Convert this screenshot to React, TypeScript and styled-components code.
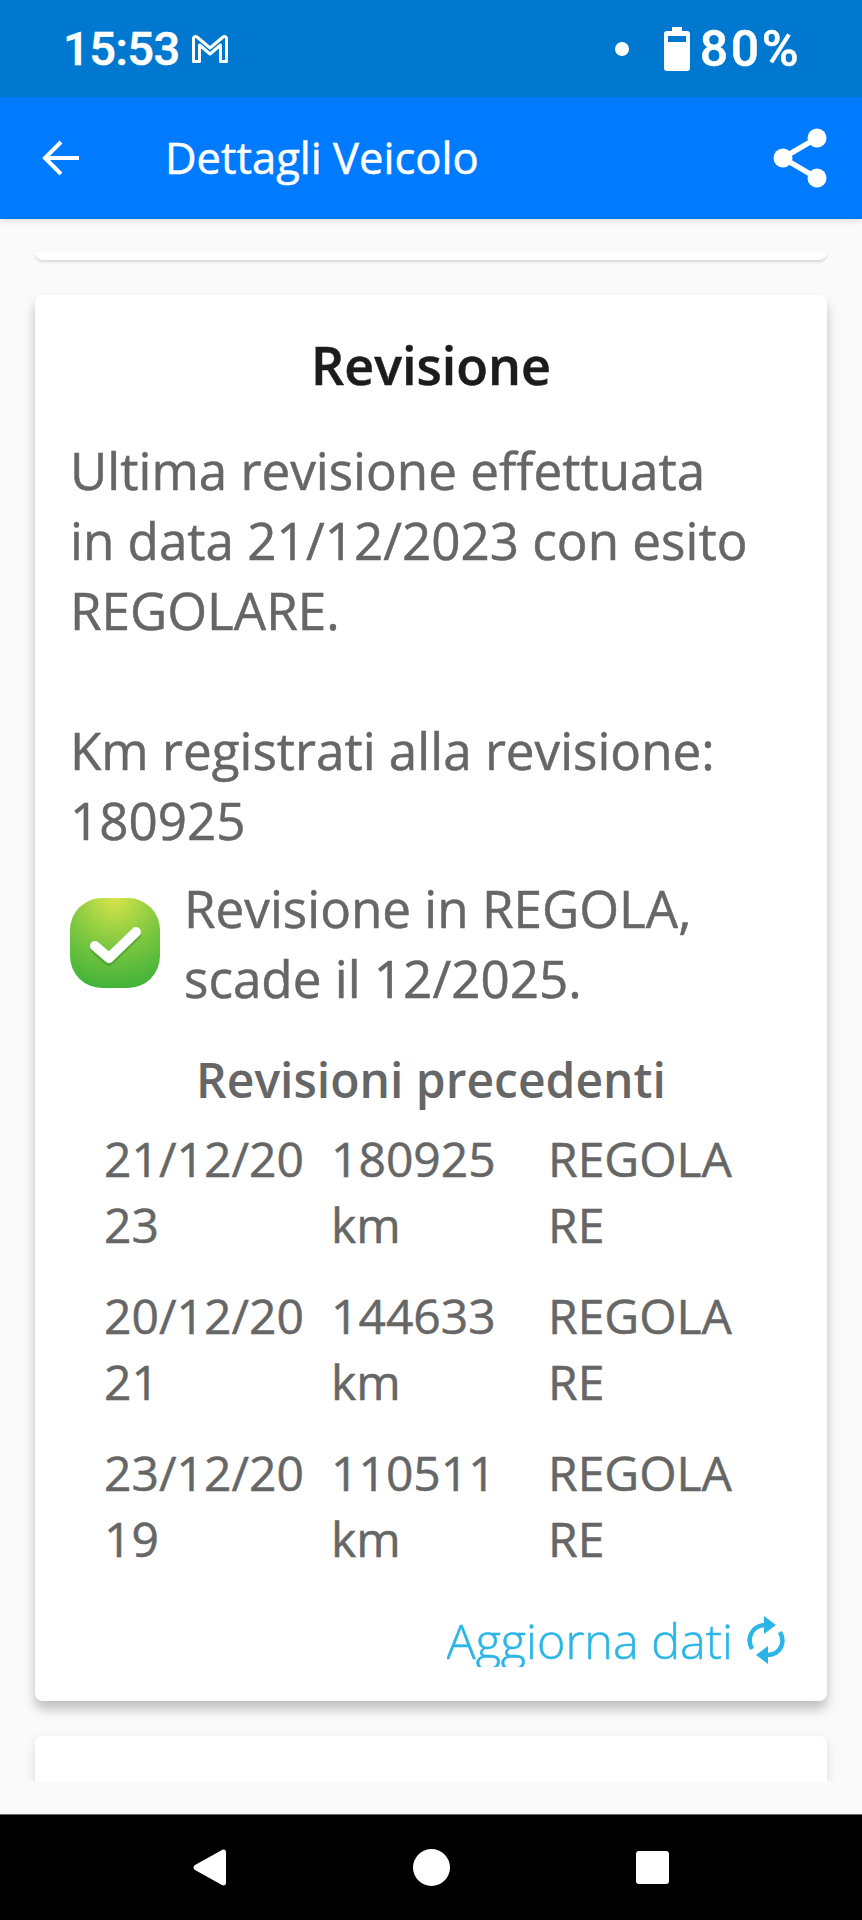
import React from "react";
import styled, { createGlobalStyle, css } from "styled-components";

const Global = createGlobalStyle`
  html, body { margin: 0; padding: 0; background: #fafafa; }
  * { box-sizing: border-box; }
`;
const thick = css` -webkit-text-stroke: 0.5px currentColor; `;
const Phone = styled.div`
  width: 862px; height: 1920px; display: flex; flex-direction: column;
  background: #fafafa; font-family: "Open Sans", sans-serif; overflow: hidden;
`;
const StatusBar = styled.div`
  height: 97px; background: #0078d0; color: #fff; display: flex; align-items: center;
  padding: 0 64px 0 63px; font-family: Roboto, sans-serif; font-weight: 500; font-size: 47px; ${thick}
`;
const Clock = styled.span` letter-spacing: -0.5px; `;
const Battery = styled.span` font-size: 50px; letter-spacing: 2.5px; margin-right: -3px; `;
const Spacer = styled.div` flex: 1; `;
const Dot = styled.span` width: 14px; height: 14px; border-radius: 50%; background: #fff; margin-right: 35px; `;
const AppBar = styled.header`
  height: 122px; background: #007bff; color: #fff; display: flex; align-items: center;
  padding: 0 35px 0 42px; position: relative; z-index: 2; box-shadow: 0 2px 6px rgba(0,0,0,.12);
`;
const AppTitle = styled.h1`
  margin: 0 0 0 85px; font-size: 43.5px; font-weight: 400; flex: 1; line-height: 1; ${thick}
`;
const Scroll = styled.main`
  height: 1562px; overflow: hidden; padding: 0 35px; display: flex; flex-direction: column; gap: 35px;
  flex: none;
`;
const PrevCard = styled.div`
  flex: none; margin-top: 33px; height: 8px; background: #fff; border-radius: 0 0 8px 8px;
  box-shadow: 0 2px 3px rgba(0,0,0,.14);
`;
const Card = styled.section`
  flex: none; background: #fff; border-radius: 8px; box-shadow: 0 8px 12px rgba(0,0,0,.24);
  padding: 35px 35px 0;
  height: 1406px;
`;
const Title = styled.h2`
  margin: 0; text-align: center; font-size: 52px; font-weight: 600; color: #1c1c1c; line-height: 70px; ${thick}
`;
const Para = styled.p`
  margin: 35px 0 0; font-size: 51.2px; font-weight: 400; line-height: 70px; color: #666; ${thick}
`;
const Status = styled.div`
  display: flex; align-items: center; gap: 24px; margin-top: 18px; font-size: 51.2px; font-weight: 400; line-height: 70px; color: #666; ${thick}
`;
const SubTitle = styled.h3`
  margin: 34px 0 0; text-align: center; font-size: 48px; font-weight: 600; color: #666; line-height: 66px;
`;
const Table = styled.div`
  display: grid; grid-template-columns: 227px 217px 200px; margin: 0 0 0 34px;
`;
const Cell = styled.div`
  font-size: 48px; font-weight: 400; line-height: 66px; color: #666; overflow-wrap: anywhere; padding: 13px 16px 12px 0; ${thick}
  &:nth-child(3n) { padding-right: 0; }
`;
const RefreshRow = styled.div`
  display: flex; justify-content: flex-end; align-items: flex-start; gap: 14px; margin-top: 25px; color: #2bb5e6;
  padding-right: 7px;
`;
const RefreshText = styled.span`
  font-size: 48.5px; font-weight: 300; line-height: 62px; height: 58px; overflow: hidden; display: block; ${thick}
`;
const RefreshIcon = styled.svg` flex: none; margin-top: 7px; `;
const NextCard = styled.div`
  flex: none; height: 100px; background: #fff; border-radius: 8px; box-shadow: 0 4px 12px rgba(0,0,0,.12);
`;
const Gap = styled.div` height: 34px; background: #fafafa; flex: none; border-bottom: 1px solid #666; `;
const NavBar = styled.nav`
  height: 105px; background: #000; display: flex; align-items: center; justify-content: center;
  flex: none;
`;
const NavSlot = styled.div` width: 221px; display: flex; justify-content: center; `;

const Check = () => (
  <svg width="90" height="90" viewBox="0 0 90 90" style={{ flex: "none" }}>
    <defs>
      <radialGradient id="g" cx="50%" cy="0%" r="100%">
        <stop offset="0" stopColor="#d7e54a" />
        <stop offset=".55" stopColor="#7cc73f" />
        <stop offset="1" stopColor="#43b33a" />
      </radialGradient>
    </defs>
    <rect width="90" height="90" rx="32" fill="url(#g)" />
    <path d="M25 48 L39 60 L66 34" fill="none" stroke="#3f9a30" strokeOpacity=".6" strokeWidth="10" strokeLinecap="round" strokeLinejoin="round" transform="translate(0 3)" />
    <path d="M25 48 L39 60 L66 34" fill="none" stroke="#fff" strokeWidth="10" strokeLinecap="round" strokeLinejoin="round" />
  </svg>
);

const rows = [
  ["21/12/2023", "180925 km", "REGOLARE"],
  ["20/12/2021", "144633 km", "REGOLARE"],
  ["23/12/2019", "110511 km", "REGOLARE"],
];

export default function App() {
  return (
    <Phone>
      <Global />
      <StatusBar>
        <Clock>15:53</Clock>
        <svg width="38" height="30" viewBox="0 0 38 30" style={{ marginLeft: 11 }} fill="none" stroke="#fff" strokeWidth="3" strokeLinejoin="round">
          <path d="M2.5 27.5V4.5C2.5 2.5 4.5 1.8 6 3L19 14 32 3c1.5-1.2 3.5-.5 3.5 1.5v23h-6V11L19 20 8.5 11v16.5z" />
        </svg>
        <Spacer />
        <Dot />
        <svg width="26" height="44" viewBox="0 0 26 44" style={{ marginRight: 10 }}>
          <path fill="#fff" d="M8 0h10v4h5a3 3 0 0 1 3 3v34a3 3 0 0 1-3 3H3a3 3 0 0 1-3-3V7a3 3 0 0 1 3-3h5z" />
          <rect x="4" y="9" width="18" height="6" fill="#0078d0" />
        </svg>
        <Battery>80%</Battery>
      </StatusBar>
      <AppBar>
        <svg width="38" height="36" viewBox="0 0 38 36" fill="none" stroke="#fff" strokeWidth="4" style={{ flex: "none" }}>
          <path d="M37 18H3M19 2L3 18l16 16" />
        </svg>
        <AppTitle>Dettagli Veicolo</AppTitle>
        <svg width="54" height="60" viewBox="0 0 54 60" fill="#fff" stroke="#fff" style={{ flex: "none" }}>
          <circle cx="44" cy="10" r="9.5" stroke="none" />
          <circle cx="10" cy="30" r="9.5" stroke="none" />
          <circle cx="44" cy="50" r="9.5" stroke="none" />
          <path d="M44 10L10 30l34 20" fill="none" strokeWidth="5.5" />
        </svg>
      </AppBar>
      <Scroll>
        <PrevCard />
        <Card>
          <Title>Revisione</Title>
          <Para>
            Ultima revisione effettuata<br />in data 21/12/2023 con esito<br />REGOLARE.<br /><br />
            Km registrati alla revisione:<br />180925
          </Para>
          <Status>
            <Check />
            <div>Revisione in REGOLA,<br />scade il 12/2025.</div>
          </Status>
          <SubTitle>Revisioni precedenti</SubTitle>
          <Table>
            {rows.flat().map((c, i) => <Cell key={i}>{c}</Cell>)}
          </Table>
          <RefreshRow>
            <RefreshText>Aggiorna dati</RefreshText>
            <RefreshIcon width="38" height="48" viewBox="0 0 38 48" fill="none" stroke="#2bb5e6" strokeWidth="4.5">
              <path d="M5 33C-1 22 5 10 18 9" />
              <path d="M33 16c6 11 0 23-13 23" />
              <path d="M17 0l12 9-12 9z" fill="#2bb5e6" stroke="none" />
              <path d="M21 30L9 39l12 9z" fill="#2bb5e6" stroke="none" />
            </RefreshIcon>
          </RefreshRow>
        </Card>
        <NextCard />
      </Scroll>
      <Gap />
      <NavBar>
        <NavSlot>
          <svg width="34" height="37" viewBox="0 0 34 37"><path fill="#fff" d="M33 3v31c0 2-2 3-4 2L2 21c-2-1-2-4 0-5L29 1c2-1 4 0 4 2z" /></svg>
        </NavSlot>
        <NavSlot>
          <svg width="37" height="37" viewBox="0 0 37 37"><circle cx="18.5" cy="18.5" r="18.5" fill="#fff" /></svg>
        </NavSlot>
        <NavSlot>
          <svg width="33" height="33" viewBox="0 0 33 33"><rect width="33" height="33" rx="3" fill="#fff" /></svg>
        </NavSlot>
      </NavBar>
    </Phone>
  );
}
